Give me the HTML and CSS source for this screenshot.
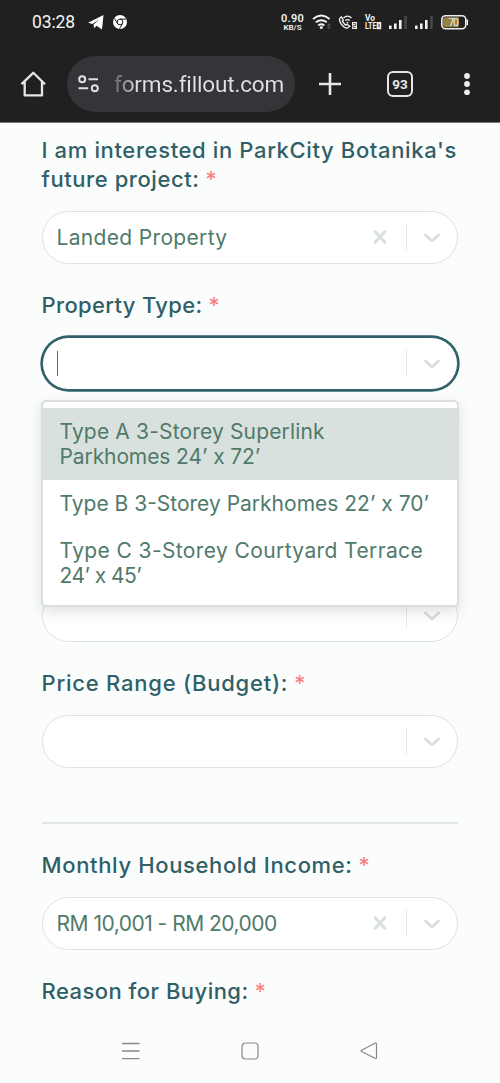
FILE: index.html
```html
<!DOCTYPE html>
<html lang="en">
<head>
<meta charset="utf-8">
<title>Fillout form</title>
<link rel="stylesheet" href="styles.css">
</head>
<body>
<svg class="defs" width="0" height="0">
  <symbol id="chev" viewBox="0 0 18 12"><path d="M2.500 3 L9 9 L15.500 3" fill="none" stroke="#d9e0dd" stroke-width="3" stroke-linecap="round" stroke-linejoin="round"/></symbol>
  <symbol id="cross" viewBox="0 0 16 16"><path d="M3 2.500 L13 13.500 M13 2.500 L3 13.500" stroke="#d9e0dd" stroke-width="3" stroke-linecap="round"/></symbol>
</svg>
<header class="top">
  <div class="status">
    <span class="clock">03:28</span>
    <svg class="tg" width="16" height="15" viewBox="0 0 16 15"><path d="M0 7.700 L15.500 0 L14 14.500 L8.500 10.800 L6.300 13.200 L5.500 9.500 L11.500 4 L4.500 8.900 Z" fill="#fff"/></svg>
    <svg class="chrome" width="14" height="14" viewBox="0 0 14 14"><circle cx="7" cy="7" r="7" fill="#fff"/><g fill="none" stroke="#202020" stroke-width="1"><circle cx="7" cy="7" r="2.900"/><path d="M7 4.100 H13 M4.500 8.500 L1.500 3.400 M9.500 8.500 L6.600 13.600"/></g></svg>
    <span class="speed"><b>0.90</b><small>KB/S</small></span>
    <svg class="indicators" width="160" height="20" viewBox="312 12 160 20">
      <g fill="none" stroke="#f4f4f4" stroke-width="1.900">
        <path d="M313 19 Q321.300 12.200 329.600 19 M315.800 22.300 Q321.300 18 326.800 22.300 M318.300 25.400 Q321.300 23 324.300 25.400"/>
        <path d="M340 18 C338 21 343.500 28.500 347.500 28 L349.700 26.300 L347 24.300 L345.500 25.200 L342.400 21.500 L343.300 20.300 L341.500 17 Z" stroke-width="1.300"/>
        <path d="M343.500 18 Q347.500 14.300 351.500 18 M345.300 20.500 Q347.500 18.800 349.700 20.500" stroke-width="1.300"/>
      </g>
      <circle cx="321.300" cy="27.500" r="1.500" fill="#f4f4f4"/><circle cx="347.500" cy="22.600" r=".9" fill="#f4f4f4"/>
      <path d="M327 25.500 l2-2.500 2 2.500z M327 26.500 l2 2.500 2-2.500z" fill="#555"/>
      <rect x="352" y="22" width="5" height="7" fill="#eee"/><path d="M353.200 23.600h2.500v1.900h-2.500v2h2.500" fill="none" stroke="#202020" stroke-width=".7"/>
      <g fill="#f4f4f4" class="volte"><text x="365" y="21.300" textLength="10" lengthAdjust="spacingAndGlyphs">Vo</text><text x="365" y="29.200" textLength="11.500" lengthAdjust="spacingAndGlyphs">LTE</text></g>
      <rect x="376.700" y="22" width="4.500" height="7.200" fill="#f4f4f4"/><path d="M379 23.700v3.800" stroke="#202020"/>
      <g fill="#f4f4f4"><rect x="389" y="25.600" width="2.600" height="3.400"/><rect x="394" y="23.500" width="2.600" height="5.500"/><rect x="399" y="20" width="2.600" height="9"/><rect x="415" y="25.600" width="2.600" height="3.400"/><rect x="420" y="23.500" width="2.600" height="5.500"/><rect x="425" y="20" width="2.600" height="9"/></g>
      <path d="M405.500 16v13 M431.500 16v13" stroke="#484848" stroke-width="2.500"/>
      <rect x="441.800" y="15.800" width="24" height="13" rx="3.800" fill="#202020" stroke="#eee" stroke-width="1.600"/>
      <path d="M445.500 17.300h13.300v10h-13.300q-2.500 0-2.500-2.500v-5q0-2.500 2.500-2.500z" fill="#958142"/>
      <path d="M467.300 19.500v5.500" stroke="#eee" stroke-width="1.500"/>
      <text x="448.500" y="26" class="level" textLength="10.500">70</text>
    </svg>
  </div>
  <div class="toolbar">
    <svg class="home" width="26" height="26" viewBox="0 0 26 26"><path d="M1.500 13.200 L13.300 1.800 L25 13.200 M4.700 11 V24.400 H22 V11" fill="none" stroke="#e6e6e6" stroke-width="2.300" stroke-linejoin="round"/></svg>
    <div class="url">
      <svg width="21" height="18" viewBox="0 0 21 18"><g fill="none" stroke="#e0e0e3" stroke-width="2"><circle cx="4.200" cy="4.300" r="3"/><path d="M10.500 4.300H20 M.5 13.200h9.700"/><circle cx="16.800" cy="13.200" r="3"/></g></svg>
      <span class="addr">forms.fillout.com</span>
    </div>
    <svg class="plus" width="22" height="22" viewBox="0 0 22 22"><path d="M11 0v22M0 11h22" stroke="#e8e8e8" stroke-width="2.600"/></svg>
    <span class="tabs">93</span>
    <svg class="dots" width="6" height="22" viewBox="0 0 6 22"><g fill="#ececec"><circle cx="3" cy="3" r="2.900"/><circle cx="3" cy="11" r="2.900"/><circle cx="3" cy="19.300" r="2.900"/></g></svg>
  </div>
</header>
<main class="form">
  <section class="field">
    <label class="label"><span class="t1">I am interested in ParkCity Botanika's</span><br><span class="t2">future project:</span><i>*</i></label>
    <div class="select"><span class="value v1">Landed Property</span><svg class="clear"><use href="#cross"/></svg><span class="bar"></span><svg class="chev"><use href="#chev"/></svg></div>
  </section>
  <section class="field">
    <label class="label"><span class="t3">Property Type:</span><i>*</i></label>
    <div class="select focused"><span class="caret"></span><span class="bar"></span><svg class="chev"><use href="#chev"/></svg>
      <div class="menu">
        <div class="option active"><span class="o1">Type A 3-Storey Superlink</span><br><span class="o2">Parkhomes 24’ x 72’</span></div>
        <div class="option"><span class="o3">Type B 3-Storey Parkhomes 22’ x 70’</span></div>
        <div class="option"><span class="o4">Type C 3-Storey Courtyard Terrace</span><br><span class="o5">24’ x 45’</span></div>
      </div>
    </div>
  </section>
  <section class="field covered">
    <div class="select"><span class="bar"></span><svg class="chev"><use href="#chev"/></svg></div>
  </section>
  <section class="field">
    <label class="label"><span class="t4">Price Range (Budget):</span><i>*</i></label>
    <div class="select"><span class="bar"></span><svg class="chev"><use href="#chev"/></svg></div>
  </section>
  <hr class="rule">
  <section class="field">
    <label class="label"><span class="t5">Monthly Household Income:</span><i>*</i></label>
    <div class="select"><span class="value v2">RM 10,001 - RM 20,000</span><svg class="clear"><use href="#cross"/></svg><span class="bar"></span><svg class="chev"><use href="#chev"/></svg></div>
  </section>
  <section class="field">
    <label class="label"><span class="t6">Reason for Buying:</span><i>*</i></label>
  </section>
</main>
<nav class="nav">
  <svg width="18" height="18" viewBox="0 0 18 18"><path d="M0 1.500h17.500M0 9h17.500M0 16.700h17.500" stroke="#888" stroke-width="1.300"/></svg>
  <svg width="18" height="18" viewBox="0 0 18 18"><rect x="1" y="1" width="16" height="16" rx="3.500" fill="none" stroke="#888" stroke-width="1.200"/></svg>
  <svg width="18" height="18" viewBox="0 0 18 18"><path d="M1.500 8.200 L15 1.200 Q16.500 .8 16.500 2.200 V15.500 Q16.500 17 15 16.300 L1.500 9.500 Q.7 8.800 1.500 8.200Z" fill="none" stroke="#888" stroke-width="1.200"/></svg>
</nav>
</body>
</html>
```
FILE: styles.css
```css
* { box-sizing: border-box; }
body { margin: 0; width: 500px; height: 1083px; overflow: hidden; background: #fbfdfc; font-family: Inter, "Open Sans", sans-serif; display: flex; flex-direction: column; }
svg { display: block; flex: none; }
.defs { position: absolute; }
.top { height: 123px; flex: none; background: #202020; border-bottom: 1px solid #77797a; }
.status { display: flex; height: 44px; align-items: center; padding-left: 32px; color: #f4f4f4; }
.clock { font: 17.500px Roboto, sans-serif; width: 56px; letter-spacing: -0.100px; }
.chrome { margin-left: 9px; }
.speed { display: flex; flex-direction: column; align-items: center; width: 25px; margin-left: 153px; font-family: Roboto, sans-serif; }
.speed b { font-size: 11px; line-height: 11px; font-weight: 600; letter-spacing: .2px; }
.speed small { font-size: 8px; line-height: 8px; font-weight: 600; }
.indicators { margin-left: 7px; }
.volte { font: 700 8.500px Roboto, sans-serif; }
.level { font: 10.500px Roboto, sans-serif; fill: #eee; }
.toolbar { display: flex; align-items: center; height: 79px; padding-left: 20px; }
.url { display: flex; align-items: center; width: 228px; height: 56px; border-radius: 28px; background: #343539; margin-left: 21px; padding-left: 11px; }
.addr { margin-left: 15px; font: 22.500px Roboto, sans-serif; letter-spacing: -0.150px; white-space: nowrap; color: transparent; background: linear-gradient(90deg, #66676a, #e2e2e5 24px); background-clip: text; -webkit-background-clip: text; }
.plus { margin-left: 24px; }
.tabs { display: flex; align-items: center; justify-content: center; width: 26px; height: 26px; margin-left: 46px; border: 2.500px solid #e6e6e6; border-radius: 6px; color: #e6e6e6; font: 700 13.500px Roboto, sans-serif; }
.dots { margin-left: 51px; }
.form { flex: 1; padding: 13px 42px 0 41.500px; }
.field { margin-bottom: 27.500px; }
.label { display: block; font-size: 22px; font-weight: 500; line-height: 29px; color: #306067; white-space: nowrap; margin-bottom: 16.500px; }
.label i { font-style: normal; font-weight: 400; color: #f87c77; margin-left: 6px; }
.t1 { letter-spacing: .63px; }
.t2 { letter-spacing: .57px; }
.t3 { letter-spacing: .34px; }
.t4 { letter-spacing: .77px; }
.t5 { letter-spacing: .64px; }
.t6 { letter-spacing: .47px; }
.select { position: relative; display: flex; align-items: center; justify-content: flex-end; height: 53px; padding-left: 14px; padding-right: 16.500px; border: 1.300px solid #dce3e0; border-radius: 27px; background: #fff; }
.value { margin-right: auto; color: #507a6a; font-size: 21px; white-space: nowrap; }
.v1 { letter-spacing: .33px; }
.v2 { letter-spacing: -.5px; }
.clear { width: 16px; height: 16px; margin-right: 17.500px; }
.bar { width: 1px; height: 28px; background: #e6eae8; margin-right: 16px; }
.chev { width: 18px; height: 12px; margin-top: 1px; }
.focused { border-color: #306067; box-shadow: 0 0 0 1.700px #306067; }
.caret { width: 1.300px; height: 25px; background: #507a6a; margin-right: auto; }
.menu { position: absolute; z-index: 2; top: 62px; left: -2px; right: -2px; height: 207.500px; border: 2.500px solid #d8dfdc; border-radius: 5px; padding-top: 6px; background: #fff; box-shadow: 0 5px 14px rgba(0,0,0,.12); }
.option { padding: 11px 17px; line-height: 25px; font-size: 21px; color: #507a6a; white-space: nowrap; }
.active { background: #d8e1dd; }
.o1 { letter-spacing: .16px; }
.o2 { letter-spacing: -.1px; }
.o4 { letter-spacing: .39px; }
.o5 { letter-spacing: -.55px; }
.covered { padding-top: 171.500px; }
.rule { height: 2px; border: 0; background: #e2e7e5; margin: 54.500px 0 27px; }
.nav { display: flex; flex: none; height: 62px; padding: 0 122px 27px; justify-content: space-between; align-items: center; }
```
